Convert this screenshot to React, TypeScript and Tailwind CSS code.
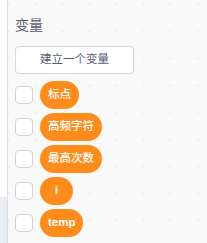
import React from 'react';

type Variable = { name: string };

const variables: Variable[] = [
  { name: '标点' },
  { name: '高频字符' },
  { name: '最高次数' },
  { name: 'i' },
  { name: 'temp' },
];

const isLatin = (s: string) => /^[\x00-\x7f]+$/.test(s);

const VariableRow: React.FC<{ variable: Variable }> = ({ variable }) => {
  return (
    <div className="flex h-[28px] items-center gap-[7px]">
      <div className="h-[18px] w-[18px] rounded-[4px] border border-[#d0d0d0] bg-white" />
      <div
        className={`flex h-[28px] min-w-[33px] items-center justify-center rounded-full bg-[#ff8c1a] px-[8px] text-white ${
          isLatin(variable.name) ? 'text-[11.5px] font-bold' : 'text-[11.5px] font-medium'
        }`}
      >
        {variable.name}
      </div>
    </div>
  );
};

const App: React.FC = () => {
  return (
    <div
      className="flex h-screen w-full overflow-hidden"
      style={{ fontFamily: '"Liberation Sans", "Noto Sans CJK SC", sans-serif' }}
    >
      {/* category strip */}
      <div className="flex w-[8px] flex-col border-r border-[#dcdcdc]">
        <div className="h-[197px] bg-white" />
        <div className="flex-1 bg-[#e9eef2]" />
      </div>

      <div className="flex-1 bg-[#f9f9f9] bg-[radial-gradient(circle,#f0f0f0_1px,transparent_1.5px)] bg-[length:27px_27px] bg-[position:-13px_-9px] pl-[7px] pt-[15px]">
        <div className="text-[14px] leading-[20px] text-[#575e75]">变量</div>

        <button className="mt-[11px] flex h-[28px] w-[119px] items-center justify-center rounded-[4px] border border-[#d9d9d9] bg-white text-[11.5px] text-[#575e75]">
          建立一个变量
        </button>

        <div className="mt-[7px] flex flex-col gap-[4px]">
          {variables.map((v) => (
            <VariableRow key={v.name} variable={v} />
          ))}
        </div>
      </div>
    </div>
  );
};

export default App;
